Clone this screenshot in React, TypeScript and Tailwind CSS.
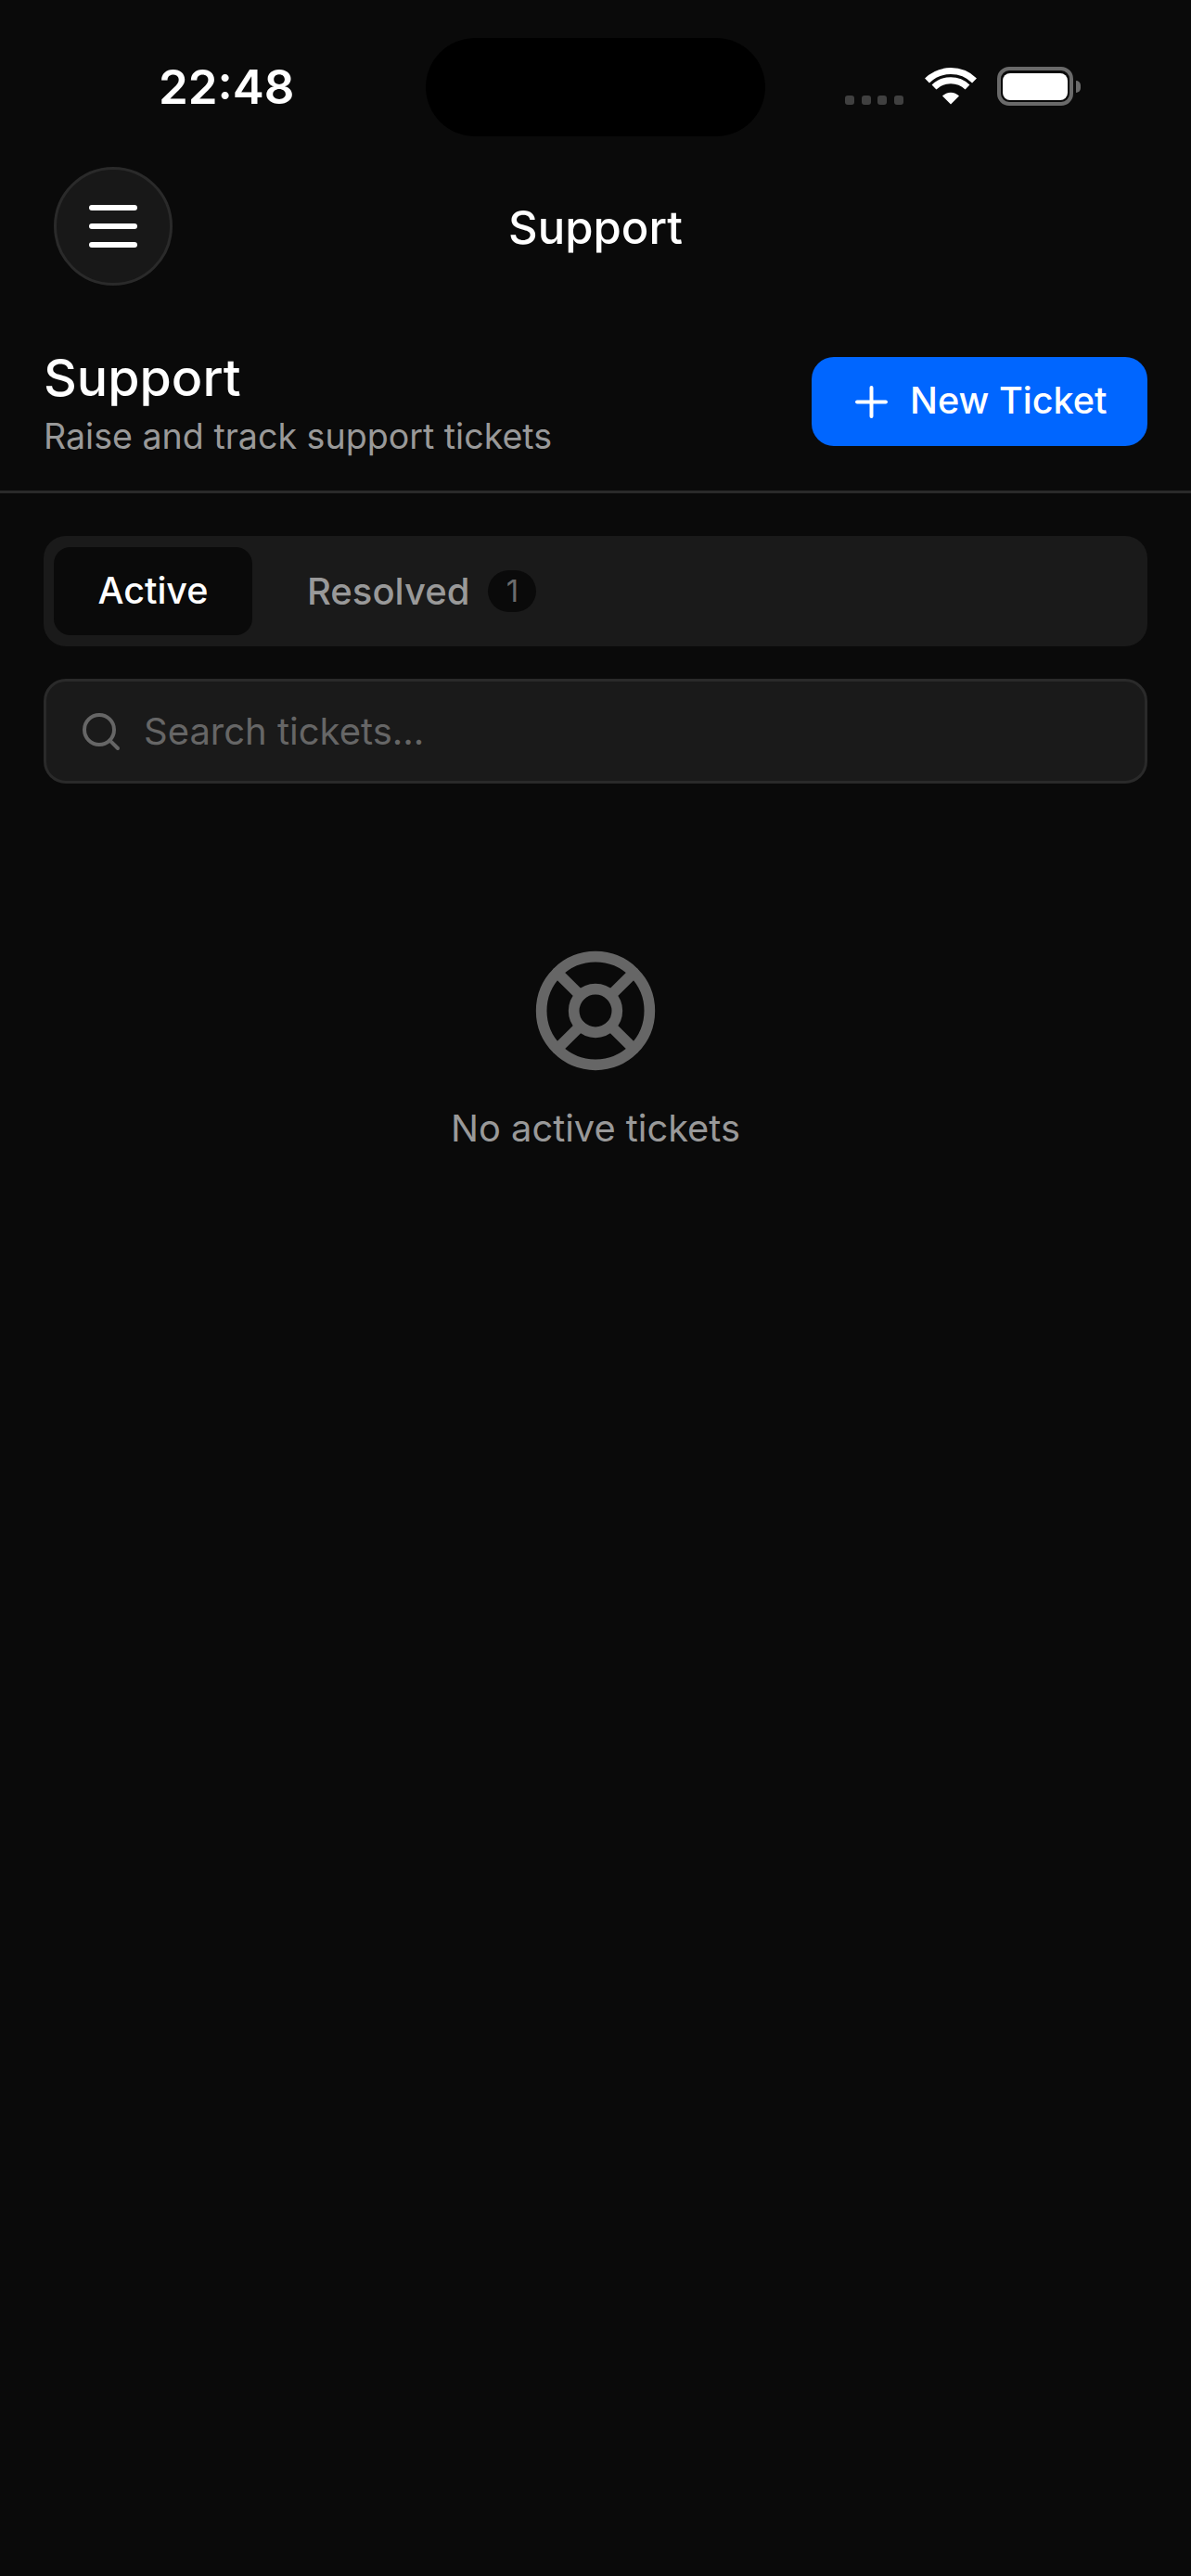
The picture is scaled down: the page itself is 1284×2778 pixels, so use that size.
import { LifeBuoy, Plus, Search } from "lucide-react";

function Wifi() {
  return (
    <svg width="56" height="41" viewBox="0 0 56 41" fill="none" className="block">
      <path d="M2.5 15A36.5 36.5 0 0 1 53.5 15" stroke="#fff" strokeWidth="7" />
      <path d="M10 22A26 26 0 0 1 46 22" stroke="#fff" strokeWidth="7" />
      <path d="M28 40.5L19 31.5A12.5 12.5 0 0 1 37 31.5Z" fill="#fff" />
    </svg>
  );
}

function Battery() {
  return (
    <div className="flex items-center">
      <div className="flex h-[42px] w-[82px] items-center justify-center rounded-[13px] border-[4px] border-[#6a6a6a]">
        <div className="h-[29px] w-[70px] rounded-[8px] bg-white" />
      </div>
      <div className="ml-[3px] h-[13px] w-[5px] rounded-r-full bg-[#6a6a6a]" />
    </div>
  );
}

function MenuLines() {
  return (
    <svg width="52" height="46" viewBox="0 0 52 46" className="block" stroke="#fff" strokeWidth="6" strokeLinecap="round">
      <path d="M3 3H49" />
      <path d="M3 23H49" />
      <path d="M3 43H49" />
    </svg>
  );
}

export default function App() {
  return (
    <div
      className="min-h-[2778px] w-full bg-[#0a0a0a] text-white"
      style={{ fontFamily: "Inter, 'Liberation Sans', sans-serif" }}
    >
      {/* Status bar */}
      <div className="flex h-[147px] items-end pl-[171px]">
        <div className="mb-[28px] w-[146px] whitespace-nowrap text-[51px] font-semibold leading-[50px]">22:48</div>
        <div className="ml-[142px] h-[106px] w-[366px] rounded-[53px] bg-black" />
        <div className="mb-[34px] ml-[86px] flex gap-[7.6px]">
          <span className="h-[10px] w-[10px] rounded-[3px] bg-[#404040]" />
          <span className="h-[10px] w-[10px] rounded-[3px] bg-[#404040]" />
          <span className="h-[10px] w-[10px] rounded-[3px] bg-[#404040]" />
          <span className="h-[10px] w-[10px] rounded-[3px] bg-[#404040]" />
        </div>
        <div className="mb-[34px] ml-[23px]"><Wifi /></div>
        <div className="mb-[33px] ml-[22px]"><Battery /></div>
      </div>

      {/* Nav bar */}
      <div className="mt-[33px] grid grid-cols-[1fr_auto_1fr] items-center px-[58px]">
        <div className="flex h-[128px] w-[128px] items-center justify-center rounded-full border-[3px] border-[#2a2a2a] bg-[#181818]">
          <MenuLines />
        </div>
        <div className="pt-[4px] text-[49px] font-medium leading-[60px]">Support</div>
        <div />
      </div>

      {/* Page header */}
      <div className="flex items-center justify-between border-b-[3px] border-[#2a2a2a] px-[47px] pb-[33px] pt-[62px]">
        <div>
          <div className="text-[55.5px] font-medium leading-[74px]">Support</div>
          <div className="pt-[2px] text-[37.6px] leading-[50px] text-[#999999]">Raise and track support tickets</div>
        </div>
        <button className="flex h-[96px] w-[362px] items-center justify-start gap-[15px] rounded-[24px] bg-[#0066ff] pl-[38px] text-[39.6px] font-medium text-white">
          <Plus size={53} strokeWidth={1.8} color="#fff" />
          <span>New Ticket</span>
        </button>
      </div>

      {/* Tabs */}
      <div className="mx-[47px] mt-[46px] flex h-[119px] items-center rounded-[24px] bg-[#1a1a1a] px-[11px]">
        <div className="flex h-[95px] w-[214px] items-center justify-center rounded-[18px] bg-[#0a0a0a] text-[39.5px] font-medium text-white">Active</div>
        <div className="ml-[59px] flex items-center text-[40px] font-medium text-[#999999]">
          <span>Resolved</span>
          <span className="ml-[20px] flex h-[45px] w-[52px] items-center justify-center rounded-full bg-[#0a0a0a] text-[33px] font-normal text-[#6b6b6b]">1</span>
        </div>
      </div>

      {/* Search */}
      <div className="mx-[47px] mt-[35px] flex h-[113px] items-center gap-[22px] rounded-[24px] border-[3px] border-[#2a2a2a] bg-[#1a1a1a] pl-[35px]">
        <Search size={48} strokeWidth={2} color="#666666" />
        <span className="text-[40px] text-[#666666]">Search tickets...</span>
      </div>

      {/* Empty state */}
      <div className="mt-[175px] flex flex-col items-center">
        <LifeBuoy size={140} strokeWidth={2} color="#666666" />
        <div className="mt-[29px] text-[39.8px] leading-[56px] text-[#999999]">No active tickets</div>
      </div>
    </div>
  );
}
